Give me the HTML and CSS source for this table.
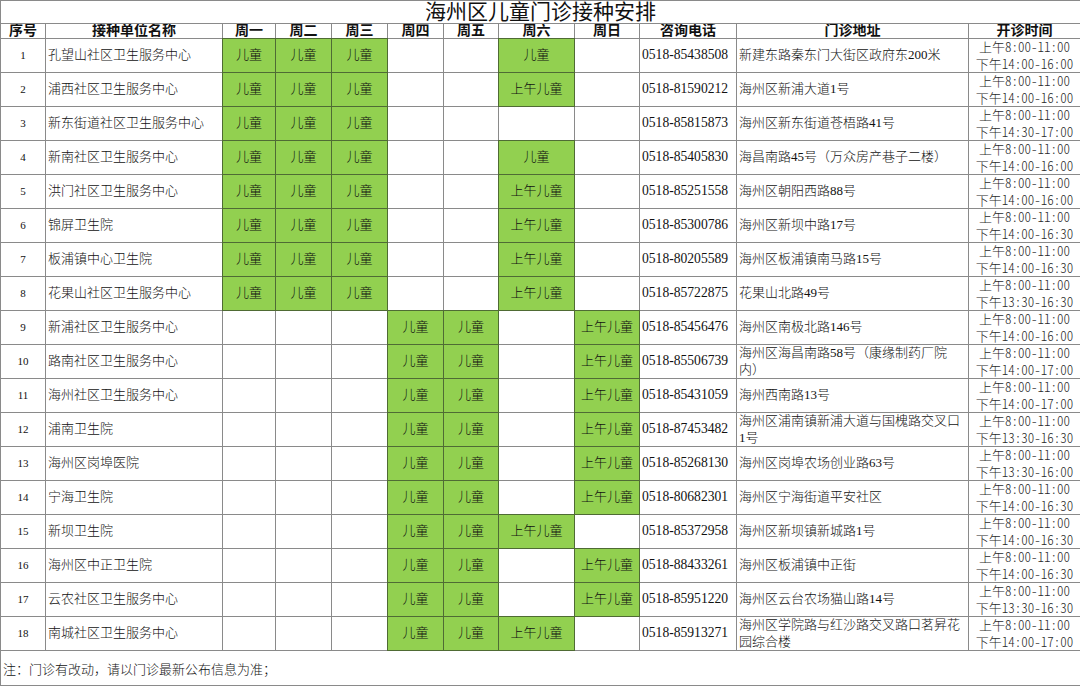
FILE: index.html
```html
<!DOCTYPE html>
<html lang="zh-CN">
<head>
<meta charset="utf-8">
<title>海州区儿童门诊接种安排</title>
<link rel="stylesheet" href="styles.css">
</head>
<body>
<table class="sched">
<colgroup>
<col class="c-no"><col class="c-name"><col class="c-d1"><col class="c-d2"><col class="c-d3"><col class="c-d4"><col class="c-d5"><col class="c-d6"><col class="c-d7"><col class="c-tel"><col class="c-addr"><col class="c-time">
</colgroup>
<tr class="title"><td colspan="12">海州区儿童门诊接种安排</td></tr>
<tr class="head"><th>序号</th><th>接种单位名称</th><th>周一</th><th>周二</th><th>周三</th><th>周四</th><th>周五</th><th>周六</th><th>周日</th><th>咨询电话</th><th>门诊地址</th><th>开诊时间</th></tr>
<tr class="row"><td class="no">1</td><td class="name">孔望山社区卫生服务中心</td><td class="g">儿童</td><td class="g">儿童</td><td class="g">儿童</td><td></td><td></td><td class="g">儿童</td><td></td><td class="tel">0518-85438508</td><td class="addr">新建东路秦东门大街区政府东200米</td><td class="time">上午8:00-11:00<br>下午14:00-16:00</td></tr>
<tr class="row"><td class="no">2</td><td class="name">浦西社区卫生服务中心</td><td class="g">儿童</td><td class="g">儿童</td><td class="g">儿童</td><td></td><td></td><td class="g">上午儿童</td><td></td><td class="tel">0518-81590212</td><td class="addr">海州区新浦大道1号</td><td class="time">上午8:00-11:00<br>下午14:00-16:00</td></tr>
<tr class="row"><td class="no">3</td><td class="name">新东街道社区卫生服务中心</td><td class="g">儿童</td><td class="g">儿童</td><td class="g">儿童</td><td></td><td></td><td></td><td></td><td class="tel">0518-85815873</td><td class="addr">海州区新东街道苍梧路41号</td><td class="time">上午8:00-11:00<br>下午14:30-17:00</td></tr>
<tr class="row"><td class="no">4</td><td class="name">新南社区卫生服务中心</td><td class="g">儿童</td><td class="g">儿童</td><td class="g">儿童</td><td></td><td></td><td class="g">儿童</td><td></td><td class="tel">0518-85405830</td><td class="addr">海昌南路45号（万众房产巷子二楼）</td><td class="time">上午8:00-11:00<br>下午14:00-16:00</td></tr>
<tr class="row"><td class="no">5</td><td class="name">洪门社区卫生服务中心</td><td class="g">儿童</td><td class="g">儿童</td><td class="g">儿童</td><td></td><td></td><td class="g">上午儿童</td><td></td><td class="tel">0518-85251558</td><td class="addr">海州区朝阳西路88号</td><td class="time">上午8:00-11:00<br>下午14:00-16:00</td></tr>
<tr class="row"><td class="no">6</td><td class="name">锦屏卫生院</td><td class="g">儿童</td><td class="g">儿童</td><td class="g">儿童</td><td></td><td></td><td class="g">上午儿童</td><td></td><td class="tel">0518-85300786</td><td class="addr">海州区新坝中路17号</td><td class="time">上午8:00-11:00<br>下午14:00-16:30</td></tr>
<tr class="row"><td class="no">7</td><td class="name">板浦镇中心卫生院</td><td class="g">儿童</td><td class="g">儿童</td><td class="g">儿童</td><td></td><td></td><td class="g">上午儿童</td><td></td><td class="tel">0518-80205589</td><td class="addr">海州区板浦镇南马路15号</td><td class="time">上午8:00-11:00<br>下午14:00-16:30</td></tr>
<tr class="row"><td class="no">8</td><td class="name">花果山社区卫生服务中心</td><td class="g">儿童</td><td class="g">儿童</td><td class="g">儿童</td><td></td><td></td><td class="g">上午儿童</td><td></td><td class="tel">0518-85722875</td><td class="addr">花果山北路49号</td><td class="time">上午8:00-11:00<br>下午13:30-16:30</td></tr>
<tr class="row"><td class="no">9</td><td class="name">新浦社区卫生服务中心</td><td></td><td></td><td></td><td class="g">儿童</td><td class="g">儿童</td><td></td><td class="g">上午儿童</td><td class="tel">0518-85456476</td><td class="addr">海州区南极北路146号</td><td class="time">上午8:00-11:00<br>下午14:00-16:00</td></tr>
<tr class="row"><td class="no">10</td><td class="name">路南社区卫生服务中心</td><td></td><td></td><td></td><td class="g">儿童</td><td class="g">儿童</td><td></td><td class="g">上午儿童</td><td class="tel">0518-85506739</td><td class="addr">海州区海昌南路58号（康缘制药厂院内）</td><td class="time">上午8:00-11:00<br>下午14:00-17:00</td></tr>
<tr class="row"><td class="no">11</td><td class="name">海州社区卫生服务中心</td><td></td><td></td><td></td><td class="g">儿童</td><td class="g">儿童</td><td></td><td class="g">上午儿童</td><td class="tel">0518-85431059</td><td class="addr">海州西南路13号</td><td class="time">上午8:00-11:00<br>下午14:00-17:00</td></tr>
<tr class="row"><td class="no">12</td><td class="name">浦南卫生院</td><td></td><td></td><td></td><td class="g">儿童</td><td class="g">儿童</td><td></td><td class="g">上午儿童</td><td class="tel">0518-87453482</td><td class="addr">海州区浦南镇新浦大道与国槐路交叉口1号</td><td class="time">上午8:00-11:00<br>下午13:30-16:30</td></tr>
<tr class="row"><td class="no">13</td><td class="name">海州区岗埠医院</td><td></td><td></td><td></td><td class="g">儿童</td><td class="g">儿童</td><td></td><td class="g">上午儿童</td><td class="tel">0518-85268130</td><td class="addr">海州区岗埠农场创业路63号</td><td class="time">上午8:00-11:00<br>下午13:30-16:00</td></tr>
<tr class="row"><td class="no">14</td><td class="name">宁海卫生院</td><td></td><td></td><td></td><td class="g">儿童</td><td class="g">儿童</td><td></td><td class="g">上午儿童</td><td class="tel">0518-80682301</td><td class="addr">海州区宁海街道平安社区</td><td class="time">上午8:00-11:00<br>下午14:00-16:30</td></tr>
<tr class="row"><td class="no">15</td><td class="name">新坝卫生院</td><td></td><td></td><td></td><td class="g">儿童</td><td class="g">儿童</td><td class="g">上午儿童</td><td></td><td class="tel">0518-85372958</td><td class="addr">海州区新坝镇新城路1号</td><td class="time">上午8:00-11:00<br>下午14:00-16:30</td></tr>
<tr class="row"><td class="no">16</td><td class="name">海州区中正卫生院</td><td></td><td></td><td></td><td class="g">儿童</td><td class="g">儿童</td><td></td><td class="g">上午儿童</td><td class="tel">0518-88433261</td><td class="addr">海州区板浦镇中正街</td><td class="time">上午8:00-11:00<br>下午14:00-16:30</td></tr>
<tr class="row"><td class="no">17</td><td class="name">云农社区卫生服务中心</td><td></td><td></td><td></td><td class="g">儿童</td><td class="g">儿童</td><td></td><td class="g">上午儿童</td><td class="tel">0518-85951220</td><td class="addr">海州区云台农场猫山路14号</td><td class="time">上午8:00-11:00<br>下午13:30-16:30</td></tr>
<tr class="row"><td class="no">18</td><td class="name">南城社区卫生服务中心</td><td></td><td></td><td></td><td class="g">儿童</td><td class="g">儿童</td><td class="g">上午儿童</td><td></td><td class="tel">0518-85913271</td><td class="addr">海州区学院路与红沙路交叉路口茗昇花园综合楼</td><td class="time">上午8:00-11:00<br>下午14:00-17:00</td></tr>
<tr class="foot"><td colspan="12">注：门诊有改动，请以门诊最新公布信息为准；</td></tr>
</table>
</body>
</html>
```

FILE: styles.css
```css
html, body {
  margin: 0;
  padding: 0;
  background: #ffffff;
}

.sched {
  border-collapse: collapse;
  table-layout: fixed;
  width: 1080px;
  font-family: "Liberation Serif", "Noto Sans CJK SC", serif;
  font-size: 13px;
  color: #111111;
}

.c-no { width: 45px; }
.c-name { width: 177px; }
.c-d1 { width: 53px; }
.c-d2 { width: 56px; }
.c-d3 { width: 56px; }
.c-d4 { width: 56px; }
.c-d5 { width: 55px; }
.c-d6 { width: 76px; }
.c-d7 { width: 65px; }
.c-tel { width: 97px; }
.c-addr { width: 232px; }
.c-time { width: 112px; }

.sched td,
.sched th {
  border: 1px solid #8a8a8a;
  padding: 0 2px;
  overflow: hidden;
  font-weight: 300;
}

.title td {
  height: 22px;
  font-size: 21px;
  line-height: 22px;
  text-align: center;
  vertical-align: bottom;
  font-weight: 400;
}

.head th {
  height: 14px;
  font-size: 14px;
  line-height: 14px;
  font-weight: 700;
  text-align: center;
  vertical-align: bottom;
  white-space: nowrap;
}

.row td {
  height: 33px;
  line-height: 16.5px;
  text-align: center;
  vertical-align: middle;
}

.row td.no {
  font-size: 11px;
}

.row td.name {
  text-align: left;
  white-space: nowrap;
}

.row td.g {
  background: #92d050;
  border-style: double;
  border-color: #4f6b34;
  white-space: nowrap;
}

.row td.tel {
  text-align: left;
  font-size: 13.6px;
  white-space: nowrap;
}

.row td.addr {
  text-align: left;
}

.row td.time {
  color: #2a2a2a;
  white-space: nowrap;
  font-family: "Noto Sans CJK SC", sans-serif;
  font-feature-settings: "hwid" 1;
  padding: 0;
}

.foot td {
  height: 34px;
  text-align: left;
  vertical-align: middle;
}
```
